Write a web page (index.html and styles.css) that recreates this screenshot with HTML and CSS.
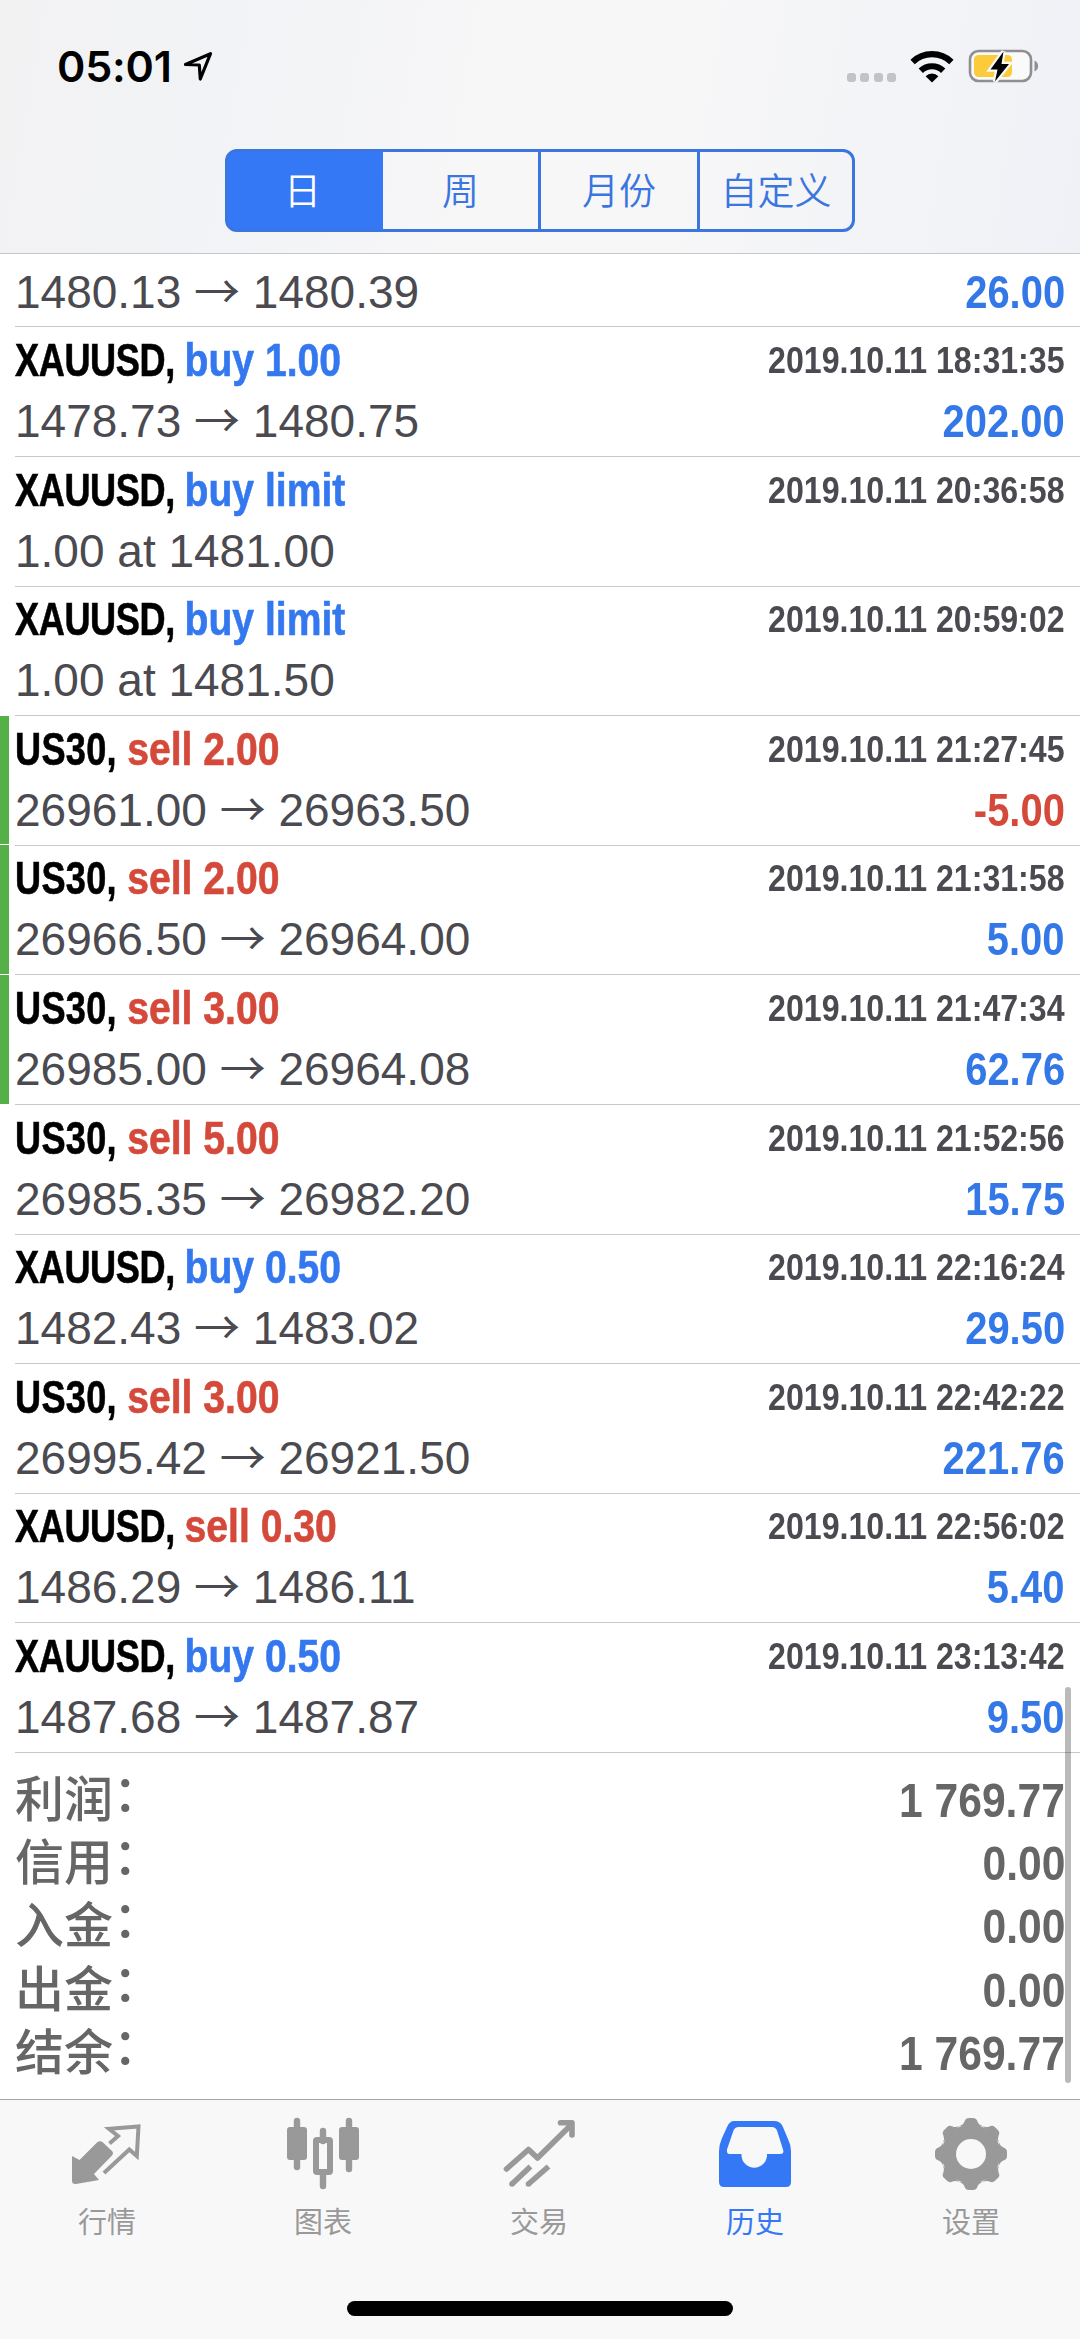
FILE: index.html
```html
<!DOCTYPE html>
<html lang="zh-CN">
<head>
<meta charset="utf-8">
<title>历史</title>
<link rel="stylesheet" href="styles.css">
</head>
<body>
<div class="screen">
  <header class="header">
    <div class="status">
      <div class="status-left">
        <span class="clock">05:01</span>
        <svg class="locate" width="32" height="32" viewBox="0 0 32 32"><path d="M2.500 13.500 L27.500 2.700 L17.300 28 L16.300 14 Z" fill="none" stroke="#000" stroke-width="3.200" stroke-linejoin="round"/></svg>
      </div>
      <div class="status-right">
        <div class="dots"><i></i><i></i><i></i><i></i></div>
        <svg class="wifi" width="44" height="34" viewBox="0 0 44 34"><path d="M22 32.500 L15.600 26.200 A9 9 0 0 1 28.400 26.200 Z"/><path d="M10.800 20.800 A16 16 0 0 1 33.200 20.800" fill="none" stroke="#000" stroke-width="6.200"/><path d="M2.600 12 A28 28 0 0 1 41.400 12" fill="none" stroke="#000" stroke-width="6.200"/></svg>
        <svg class="battery" width="72" height="36" viewBox="0 0 72 36"><rect x="2" y="3" width="61" height="30" rx="8.500" fill="#fafafa" stroke="#8e8e93" stroke-width="2.600"/><path d="M66.500 12.500 A6 6 0 0 1 66.500 23.500 Z" fill="#8e8e93"/><rect x="6" y="7" width="38" height="22" rx="4.500" fill="#fbcb3c"/><path d="M35.500 3.500 L22.500 21.500 H29.500 L27 33.500 L41 16 H33.500 Z" fill="#000" stroke="#fafafa" stroke-width="4.500" paint-order="stroke"/></svg>
      </div>
    </div>
    <nav class="segments">
      <span class="segment selected">日</span><span class="segment">周</span><span class="segment ruled">月份</span><span class="segment ruled">自定义</span>
    </nav>
  </header>

  <main class="list">
    <div class="row clipped">
      <div class="line prices"><span>1480.13 <b class="to">→</b> 1480.39</span><span class="profit">26.00</span></div>
    </div>
    <div class="row">
      <div class="line"><span class="deal metal">XAUUSD, <em class="buy">buy 1.00</em></span><time>2019.10.11 18:31:35</time></div>
      <div class="line prices"><span>1478.73 <b class="to">→</b> 1480.75</span><span class="profit">202.00</span></div>
    </div>
    <div class="row">
      <div class="line"><span class="deal metal">XAUUSD, <em class="buy">buy limit</em></span><time>2019.10.11 20:36:58</time></div>
      <div class="line prices"><span>1.00 at 1481.00</span></div>
    </div>
    <div class="row">
      <div class="line"><span class="deal metal">XAUUSD, <em class="buy">buy limit</em></span><time>2019.10.11 20:59:02</time></div>
      <div class="line prices"><span>1.00 at 1481.50</span></div>
    </div>
    <div class="row marked">
      <div class="line"><span class="deal">US30, <em class="sell">sell 2.00</em></span><time>2019.10.11 21:27:45</time></div>
      <div class="line prices"><span>26961.00 <b class="to">→</b> 26963.50</span><span class="profit loss">-5.00</span></div>
    </div>
    <div class="row marked">
      <div class="line"><span class="deal">US30, <em class="sell">sell 2.00</em></span><time>2019.10.11 21:31:58</time></div>
      <div class="line prices"><span>26966.50 <b class="to">→</b> 26964.00</span><span class="profit">5.00</span></div>
    </div>
    <div class="row marked">
      <div class="line"><span class="deal">US30, <em class="sell">sell 3.00</em></span><time>2019.10.11 21:47:34</time></div>
      <div class="line prices"><span>26985.00 <b class="to">→</b> 26964.08</span><span class="profit">62.76</span></div>
    </div>
    <div class="row">
      <div class="line"><span class="deal">US30, <em class="sell">sell 5.00</em></span><time>2019.10.11 21:52:56</time></div>
      <div class="line prices"><span>26985.35 <b class="to">→</b> 26982.20</span><span class="profit">15.75</span></div>
    </div>
    <div class="row">
      <div class="line"><span class="deal metal">XAUUSD, <em class="buy">buy 0.50</em></span><time>2019.10.11 22:16:24</time></div>
      <div class="line prices"><span>1482.43 <b class="to">→</b> 1483.02</span><span class="profit">29.50</span></div>
    </div>
    <div class="row">
      <div class="line"><span class="deal">US30, <em class="sell">sell 3.00</em></span><time>2019.10.11 22:42:22</time></div>
      <div class="line prices"><span>26995.42 <b class="to">→</b> 26921.50</span><span class="profit">221.76</span></div>
    </div>
    <div class="row">
      <div class="line"><span class="deal metal">XAUUSD, <em class="sell">sell 0.30</em></span><time>2019.10.11 22:56:02</time></div>
      <div class="line prices"><span>1486.29 <b class="to">→</b> 1486.11</span><span class="profit">5.40</span></div>
    </div>
    <div class="row">
      <div class="line"><span class="deal metal">XAUUSD, <em class="buy">buy 0.50</em></span><time>2019.10.11 23:13:42</time></div>
      <div class="line prices"><span>1487.68 <b class="to">→</b> 1487.87</span><span class="profit">9.50</span></div>
    </div>
    <dl class="summary">
      <div><dt>利润<span class="colon">：</span></dt><dd>1 769.77</dd></div>
      <div><dt>信用<span class="colon">：</span></dt><dd>0.00</dd></div>
      <div><dt>入金<span class="colon">：</span></dt><dd>0.00</dd></div>
      <div><dt>出金<span class="colon">：</span></dt><dd>0.00</dd></div>
      <div><dt>结余<span class="colon">：</span></dt><dd>1 769.77</dd></div>
    </dl>
    <div class="scrollbar"></div>
  </main>

  <footer class="footer">
    <nav class="tabs">
      <a class="tab">
        <svg width="80" height="80" viewBox="0 0 80 80"><path d="M4 36 L11.500 40 L29 22.500 Q32 20 35 22.500 L44 31 Q46 33 44 35.500 L26 54 L31 60 L8 64 Q4 64.500 4 60.500 Z"/><path d="M41.500 23.500 L50 16 L41 8.800 L70.500 6.500 L68.800 36 L61.300 29.500 L36 53" fill="none" stroke="currentColor" stroke-width="4"/></svg>
        <span>行情</span>
      </a>
      <a class="tab">
        <svg width="80" height="80" viewBox="0 0 80 80"><g transform="translate(-1)"><path d="M14 1v46M66 1v48M40 11v10M40 54v12" stroke="currentColor" stroke-width="6.400" stroke-linecap="round"/><rect x="4" y="7" width="20" height="33" rx="3"/><rect x="56" y="7" width="20" height="33" rx="3"/><rect x="33" y="20" width="14" height="32" rx="1" fill="none" stroke="currentColor" stroke-width="6"/></g></svg>
        <span>图表</span>
      </a>
      <a class="tab">
        <svg width="80" height="80" viewBox="0 0 80 80"><g stroke="currentColor" stroke-width="5.600" fill="none"><path d="M6.500 49 L28.500 29.500 L37.500 38 L71 5" stroke-linejoin="round" stroke-linecap="round"/><path d="M60.500 2.800 H72 V15" stroke-linejoin="round" stroke-linecap="round"/><path d="M12 64 L30.500 46.500M28.500 64 L48.500 46.500"/></g><circle cx="12" cy="64" r="2.800"/><circle cx="28.500" cy="64" r="2.800"/></svg>
        <span>交易</span>
      </a>
      <a class="tab active">
        <svg width="80" height="80" viewBox="0 0 80 80"><path fill-rule="evenodd" d="M18 1 H58 Q64 1 66.500 6 L72 19 Q75 25 75 31 V62 Q75 67 70 67 H8 Q3 67 3 62 V31 Q3 25 6 18 L11.500 6 Q14 1 18 1 Z M22.500 7 Q19 7 17.500 10.500 L11 29.500 Q10.500 34 13.500 34 H25.500 V36 A12.800 12.800 0 0 0 51 36 V34 H64 Q68.500 34 67 29.500 L61 10.500 Q59.500 7 56 7 Z"/></svg>
        <span>历史</span>
      </a>
      <a class="tab">
        <svg width="80" height="80" viewBox="0 0 80 80"><defs><mask id="hub" maskUnits="userSpaceOnUse" x="0" y="-6" width="80" height="80"><rect y="-6" width="80" height="80" fill="#fff"/><circle cx="39" cy="34" r="15" fill="#000"/></mask><g id="tooth"><path d="M27.500 6 Q31.500 4.500 32.500 1.500 Q33.500 -2 37 -2 H41 Q44.500 -2 45.500 1.500 Q46.500 4.500 50.500 6 Z"/></g></defs><g mask="url(#hub)"><circle cx="39" cy="34" r="29.500"/><use href="#tooth"/><use href="#tooth" transform="rotate(45 39 34)"/><use href="#tooth" transform="rotate(90 39 34)"/><use href="#tooth" transform="rotate(135 39 34)"/><use href="#tooth" transform="rotate(180 39 34)"/><use href="#tooth" transform="rotate(225 39 34)"/><use href="#tooth" transform="rotate(270 39 34)"/><use href="#tooth" transform="rotate(315 39 34)"/></g></svg>
        <span>设置</span>
      </a>
    </nav>
    <div class="home"></div>
  </footer>
</div>
</body>
</html>
```
FILE: styles.css
```css
* { box-sizing: border-box; }
body { margin: 0; background: #fff; }
.screen {
  width: 1080px;
  height: 2339px;
  display: flex;
  flex-direction: column;
  overflow: hidden;
  font-family: "Liberation Sans", "Noto Sans CJK SC", sans-serif;
  color: #4a4a50;
}

/* header */
.header {
  height: 254px;
  flex: none;
  border-bottom: 1px solid #c6c7ca;
  background: linear-gradient(100deg, #f2f2f3 0%, #f2f3f6 22%, #f7f7f8 45%, #f7f7f8 62%, #f3f4f7 80%, #f0f1f6 100%);
}
.status {
  height: 149px;
  padding: 0 40px 0 57px;
  display: flex;
  justify-content: space-between;
}
.status-left { display: flex; align-items: flex-start; }
.clock {
  padding-top: 40px;
  width: 126px;
  font: 600 43px/52px Inter, sans-serif;
  letter-spacing: -.2px;
  color: #000;
}
.locate { margin-top: 51px; }
.status-right { display: flex; align-items: flex-start; }
.dots { display: flex; gap: 4.500px; margin: 73px 14px 0 0; }
.dots i { width: 9px; height: 9px; border-radius: 3px; background: #c3c3c5; }
.wifi { margin: 50px 14px 0 0; }
.battery { margin-top: 48px; }
.segments {
  width: 630px;
  height: 83px;
  margin: 0 auto;
  display: grid;
  grid-template-columns: 155px 155px 159px 1fr;
  border: 3px solid #3a75e0;
  border-radius: 12px;
  overflow: hidden;
  background: linear-gradient(90deg, #3478f6 30px, transparent 30px);
}
.segment {
  font: 350 37px/74px "Noto Sans CJK SC", sans-serif;
  text-align: center;
  color: #3a75e0;
}
.segment.ruled { border-left: 3px solid #3a75e0; }
.segment.selected { background: #3478f6; color: #fff; padding-right: 6px; }

/* deals */
.list { position: relative; flex: 1; background: #fff; }
.row { height: 129.600px; padding: 3px 15px 0; position: relative; }
.row::after { content: ""; display: block; height: 1px; margin: 5px -15px 0 0; background: #c9c9cc; }
.row.clipped { height: 73px; padding-top: 7px; }
.row.clipped .line { height: 60px; }
.marked::before {
  content: "";
  position: absolute;
  left: 0;
  top: 0;
  width: 9px;
  height: 128.600px;
  background: #55b047;
}
.line { height: 60px; display: flex; justify-content: space-between; line-height: 60px; white-space: nowrap; }
.prices { font-size: 46px; height: 61px; line-height: 62px; }
.to { font-family: "Noto Sans CJK SC", sans-serif; font-weight: 400; line-height: 0; }

/* condensed bold face */
.deal, time, .profit, dd { font-weight: 700; transform: scaleX(.868); transform-origin: right; }
.deal {
  font-size: 46px;
  letter-spacing: .4px;
  color: #000;
  -webkit-text-stroke: .6px currentColor;
  transform: scaleX(.785);
  transform-origin: left;
}
.deal.metal { letter-spacing: -.5px; }
.deal em { display: inline-block; font-style: normal; letter-spacing: 0; transform: scaleX(1.083); transform-origin: left; }
.buy { color: #3478f0; }
.sell { color: #d5493a; }
time { font-size: 37px; line-height: 62px; }
.profit { color: #3478e8; }
.profit.loss { color: #d5493a; }

/* totals */
.summary { margin: 0; padding: 16px 15px 0; color: #666; }
.summary div { height: 63.400px; line-height: 63.400px; display: flex; justify-content: space-between; }
dt { font-size: 49px; font-weight: 500; }
.colon { vertical-align: 6px; line-height: 0; }
dd { margin: 0; font-size: 48px; transform: scaleX(.888); }
.scrollbar { position: absolute; right: 9px; top: 1433px; width: 6px; height: 396px; border-radius: 3px; background: rgba(0, 0, 0, .27); }

/* tab bar */
.footer {
  height: 240px;
  flex: none;
  border-top: 1px solid #a5a5a7;
  background: #f8f8f8;
  display: flex;
  flex-direction: column;
  justify-content: space-between;
  align-items: center;
  padding-bottom: 23px;
}
.tabs { display: flex; width: 100%; }
.tab {
  flex: 1;
  display: flex;
  flex-direction: column;
  align-items: center;
  padding-top: 20px;
  color: #999;
  font: 400 29px/40px "Noto Sans CJK SC", sans-serif;
}
.tab span { margin-right: 2px; }
.tab svg { fill: currentColor; overflow: visible; }
.tab.active { color: #3478f6; }
.home { width: 386px; height: 15px; border-radius: 8px; background: #000; }
```
